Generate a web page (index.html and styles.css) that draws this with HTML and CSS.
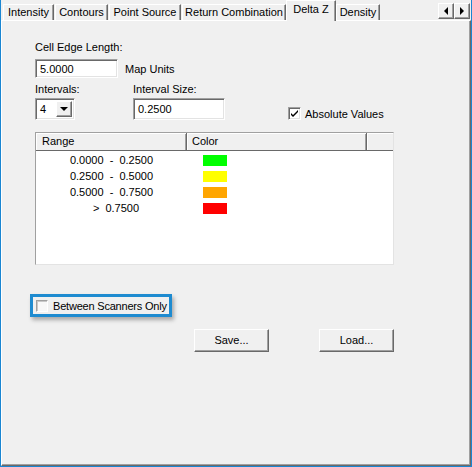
FILE: index.html
```html
<!DOCTYPE html>
<html>
<head>
<meta charset="utf-8">
<link rel="stylesheet" href="styles.css">
</head>
<body>
<div class="window">
  <div class="tabstrip">
    <div class="tab w-int">Intensity</div>
    <div class="tab w-con">Contours</div>
    <div class="tab w-pts">Point Source</div>
    <div class="tab w-ret">Return Combination</div>
    <div class="tab tab-sel w-dz">Delta Z</div>
    <div class="tab w-den">Density</div>
    <div class="scrollers">
      <div class="sbtn"><span class="tri-left"></span></div>
      <div class="sbtn"><span class="tri-right"></span></div>
    </div>
  </div>
  <div class="panel">
    <div class="label">Cell Edge Length:</div>
    <div class="row-cell">
      <div class="field f-cell">5.0000</div>
      <span class="units">Map Units</span>
    </div>
    <div class="row-int">
      <div class="col col1">
        <div class="label">Intervals:</div>
        <div class="select">
          <span class="sel-val">4</span>
          <span class="sel-btn"><span class="tri-down"></span></span>
        </div>
      </div>
      <div class="col col2">
        <div class="label">Interval Size:</div>
        <div class="field f-size">0.2500</div>
      </div>
      <div class="abs">
        <span class="cb cb-checked">
          <svg width="9" height="9" viewBox="0 0 9 9"><path d="M1 4 L3 6 L8 1 L8 3 L3 8 L1 6 Z" fill="#000"/></svg>
        </span>
        <span class="cb-text">Absolute Values</span>
      </div>
    </div>
    <div class="list">
      <div class="lhead">
        <div class="hcell">Range</div>
        <div class="hcell hc2">Color</div>
        <div class="hcell"></div>
      </div>
      <div class="lbody">
        <div class="lrow"><span class="rng">0.0000  -  0.2500</span><span class="swc"><span class="sw sw-green"></span></span><span></span></div>
        <div class="lrow"><span class="rng">0.2500  -  0.5000</span><span class="swc"><span class="sw sw-yellow"></span></span><span></span></div>
        <div class="lrow"><span class="rng">0.5000  -  0.7500</span><span class="swc"><span class="sw sw-orange"></span></span><span></span></div>
        <div class="lrow"><span class="rng rng-gt">&gt;  0.7500</span><span class="swc"><span class="sw sw-red"></span></span><span></span></div>
      </div>
    </div>
    <div class="between">
      <span class="cb cb-plain"></span>
      <span class="cb-text">Between Scanners Only</span>
    </div>
    <div class="buttons">
      <div class="btn">Save...</div>
      <div class="btn">Load...</div>
    </div>
  </div>
</div>
</body>
</html>
```
FILE: styles.css
```css
* { box-sizing: border-box; }
html, body { margin: 0; padding: 0; background: #f0f0f0; }
body {
  font-family: "Liberation Sans", Arial, sans-serif;
  font-size: 11px;
  color: #000;
}
.window {
  width: 472px;
  height: 467px;
  border: 1px solid #1a86d2;
  border-top: none;
  background: #f0f0f0;
  display: flex;
  flex-direction: column;
}
.tabstrip {
  height: 20px;
  display: flex;
  align-items: flex-end;
  padding-left: 2px;
  gap: 1px;
  position: relative;
  z-index: 2;
}
.tab {
  height: 16px;
  line-height: 15px;
  text-align: center;
  border-top: 1px solid #fff;
  border-left: 1px solid #fff;
  border-right: 1px solid #696969;
  box-shadow: inset -1px 0 #a0a0a0;
  white-space: nowrap;
  background: #f0f0f0;
}
.w-int { width: 51px; }
.w-con { width: 53px; }
.w-pts { width: 72px; }
.w-ret { width: 104px; margin-right: -1px; }
.w-dz { width: 50px; }
.w-den { width: 44px; margin-left: -1px; }
.tab-sel {
  height: 21px;
  line-height: 17px;
  margin-bottom: -1px;
  padding-bottom: 3px;
}
.scrollers {
  margin-left: auto;
  margin-right: 1px;
  margin-bottom: 1px;
  display: flex;
}
.sbtn {
  width: 16px;
  height: 16px;
  border-top: 1px solid #fff;
  border-left: 1px solid #fff;
  border-right: 1px solid #696969;
  border-bottom: 1px solid #696969;
  box-shadow: inset -1px -1px #a0a0a0;
  display: flex;
  align-items: center;
  justify-content: center;
  background: #f0f0f0;
}
.tri-left {
  width: 0; height: 0;
  border-top: 4px solid transparent;
  border-bottom: 4px solid transparent;
  border-right: 4px solid #000;
}
.tri-right {
  width: 0; height: 0;
  border-top: 4px solid transparent;
  border-bottom: 4px solid transparent;
  border-left: 4px solid #000;
}
.tri-down {
  width: 0; height: 0;
  border-left: 4px solid transparent;
  border-right: 4px solid transparent;
  border-top: 4px solid #000;
}
.panel {
  flex: 1;
  border-top: 1px solid #fff;
  border-left: 1px solid #fff;
  border-right: 1px solid #696969;
  border-bottom: 1px solid #696969;
  box-shadow: inset -1px -1px #a0a0a0;
  padding: 19px 0 0 33px;
  position: relative;
  z-index: 1;
}
.label {
  line-height: 14px;
  height: 14px;
  white-space: nowrap;
}
.row-cell {
  margin-top: 5px;
  display: flex;
  align-items: center;
}
.field {
  background: #fff;
  border-top: 1px solid #a0a0a0;
  border-left: 1px solid #a0a0a0;
  border-right: 1px solid #fff;
  border-bottom: 1px solid #fff;
  box-shadow: inset 1px 1px #696969, inset -1px -1px #e3e3e3;
  padding-left: 4px;
  display: flex;
  align-items: center;
}
.f-cell { width: 83px; height: 19px; }
.f-size { width: 92px; height: 22px; margin-top: 2px; }
.units { margin-left: 7px; }
.row-int {
  margin-top: 4px;
  display: flex;
}
.col1 { width: 98px; }
.col2 { width: 92px; }
.select {
  margin-top: 2px;
  width: 40px;
  height: 22px;
  background: #fff;
  border-top: 1px solid #a0a0a0;
  border-left: 1px solid #a0a0a0;
  border-right: 1px solid #fff;
  border-bottom: 1px solid #fff;
  box-shadow: inset 1px 1px #696969, inset -1px -1px #e3e3e3;
  display: flex;
  align-items: center;
  padding-left: 4px;
  padding-right: 2px;
}
.sel-val { flex: 1; }
.sel-btn {
  width: 16px;
  height: 16px;
  background: #f0f0f0;
  border-top: 1px solid #fff;
  border-left: 1px solid #fff;
  border-right: 1px solid #696969;
  border-bottom: 1px solid #696969;
  box-shadow: inset -1px -1px #a0a0a0;
  display: flex;
  align-items: center;
  justify-content: center;
}
.abs {
  margin-left: 63px;
  margin-top: 25px;
  display: flex;
  align-items: center;
  height: 13px;
}
.cb {
  width: 13px;
  height: 13px;
  background: #fff;
  border-top: 1px solid #a0a0a0;
  border-left: 1px solid #a0a0a0;
  border-right: 1px solid #fff;
  border-bottom: 1px solid #fff;
  box-shadow: inset 1px 1px #696969, inset -1px -1px #e3e3e3;
  display: flex;
  align-items: center;
  justify-content: center;
  flex: none;
}
.cb-text { margin-left: 4px; white-space: nowrap; }
.list {
  margin-top: 12px;
  width: 359px;
  height: 133px;
  background: #fff;
  border-top: 1px solid #a0a0a0;
  border-left: 1px solid #a0a0a0;
  border-right: 1px solid #e3e3e3;
  border-bottom: 1px solid #e3e3e3;
}
.lhead {
  display: grid;
  grid-template-columns: 151px 180px 26px;
  height: 18px;
  background: #f0f0f0;
  border-bottom: 1px solid #696969;
}
.hcell {
  box-shadow: inset 1px 1px #fff, inset -1px 0 #a0a0a0;
  border-right: 1px solid #696969;
  padding-left: 6px;
  line-height: 17px;
}
.hcell:last-child { border-right: none; box-shadow: inset 1px 1px #fff; }
.hc2 { padding-left: 5px; }
.lbody { padding-top: 1px; }
.lrow {
  display: grid;
  grid-template-columns: 151px 180px 26px;
  height: 16px;
  line-height: 16px;
}
.rng { text-align: center; white-space: pre; }
.rng-gt { padding-left: 9px; }
.swc {
  padding-left: 16px;
  display: flex;
  align-items: center;
}
.sw { width: 24px; height: 11px; display: block; }
.sw-green { background: #00ff00; }
.sw-yellow { background: #ffff00; }
.sw-orange { background: #ffa500; }
.sw-red { background: #ff0000; }
.between {
  margin-top: 29px;
  margin-left: -5px;
  width: 142px;
  height: 23px;
  border: 3px solid #1e8bd0;
  box-shadow: 2px 3px 4px rgba(0, 0, 0, 0.3);
  display: flex;
  align-items: center;
  padding-left: 3px;
}
.cb-plain {
  width: 12px;
  height: 12px;
  background: #f8f8f8;
  border-top: 1px solid #a0a0a0;
  border-left: 1px solid #a0a0a0;
  border-right: 1px solid #fff;
  border-bottom: 1px solid #fff;
  box-shadow: inset 1px 1px #c8c8c8;
}
.between .cb-text { margin-left: 5px; letter-spacing: -0.2px; }
.buttons {
  margin-top: 12px;
  margin-left: 159px;
  display: flex;
  gap: 50px;
}
.btn {
  width: 75px;
  height: 23px;
  line-height: 21px;
  text-align: center;
  background: #f0f0f0;
  border-top: 1px solid #fff;
  border-left: 1px solid #fff;
  border-right: 1px solid #696969;
  border-bottom: 1px solid #696969;
  box-shadow: inset -1px -1px #a0a0a0;
}
```
